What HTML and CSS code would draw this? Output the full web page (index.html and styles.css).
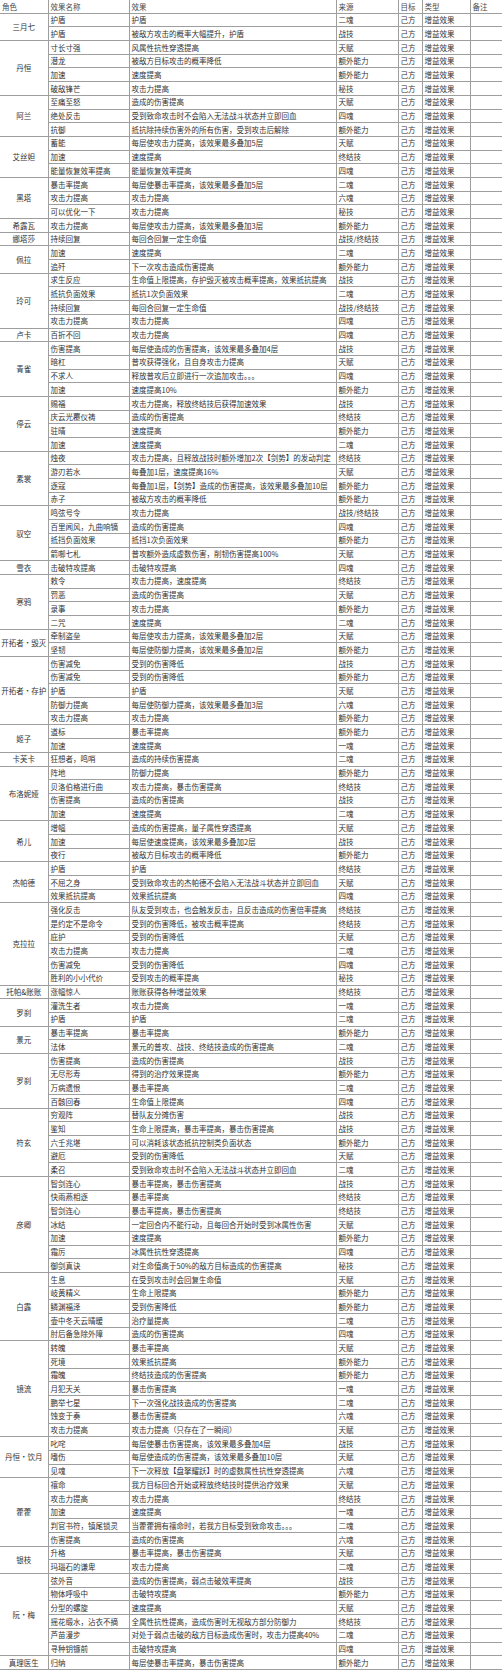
FILE: index.html
```html
<!DOCTYPE html>
<html lang="zh-CN">
<head>
<meta charset="utf-8">
<title>增益效果</title>
<link rel="stylesheet" href="styles.css">
</head>
<body>
<table class="t">
<colgroup><col class="c1"><col class="c2"><col class="c3"><col class="c4"><col class="c5"><col class="c6"><col class="c7"></colgroup>
<tr class="hd"><td class="f">角色</td><td>效果名称</td><td>效果</td><td>来源</td><td>目标</td><td>类型</td><td class="l">备注</td></tr>

<tr class="g"><td class="n" rowspan="2">三月七</td><td>护盾</td><td>护盾</td><td>二魂</td><td>己方</td><td>增益效果</td><td class="l"></td></tr>
<tr><td>护盾</td><td>被敌方攻击的概率大幅提升，护盾</td><td>战技</td><td>己方</td><td>增益效果</td><td class="l"></td></tr>

<tr class="g"><td class="n" rowspan="4">丹恒</td><td>寸长寸强</td><td>风属性抗性穿透提高</td><td>天赋</td><td>己方</td><td>增益效果</td><td class="l"></td></tr>
<tr><td>潜龙</td><td>被敌方目标攻击的概率降低</td><td>额外能力</td><td>己方</td><td>增益效果</td><td class="l"></td></tr>
<tr><td>加速</td><td>速度提高</td><td>额外能力</td><td>己方</td><td>增益效果</td><td class="l"></td></tr>
<tr><td>破敌锋芒</td><td>攻击力提高</td><td>秘技</td><td>己方</td><td>增益效果</td><td class="l"></td></tr>

<tr class="g"><td class="n" rowspan="3">阿兰</td><td>至痛至怒</td><td>造成的伤害提高</td><td>天赋</td><td>己方</td><td>增益效果</td><td class="l"></td></tr>
<tr><td>绝处反击</td><td>受到致命攻击时不会陷入无法战斗状态并立即回血</td><td>四魂</td><td>己方</td><td>增益效果</td><td class="l"></td></tr>
<tr><td>抗御</td><td>抵抗除持续伤害外的所有伤害，受到攻击后解除</td><td>额外能力</td><td>己方</td><td>增益效果</td><td class="l"></td></tr>

<tr class="g"><td class="n" rowspan="3">艾丝妲</td><td>蓄能</td><td>每层使攻击力提高，该效果最多叠加5层</td><td>天赋</td><td>己方</td><td>增益效果</td><td class="l"></td></tr>
<tr><td>加速</td><td>速度提高</td><td>终结技</td><td>己方</td><td>增益效果</td><td class="l"></td></tr>
<tr><td>能量恢复效率提高</td><td>能量恢复效率提高</td><td>四魂</td><td>己方</td><td>增益效果</td><td class="l"></td></tr>

<tr class="g"><td class="n" rowspan="3">黑塔</td><td>暴击率提高</td><td>每层使暴击率提高，该效果最多叠加5层</td><td>二魂</td><td>己方</td><td>增益效果</td><td class="l"></td></tr>
<tr><td>攻击力提高</td><td>攻击力提高</td><td>六魂</td><td>己方</td><td>增益效果</td><td class="l"></td></tr>
<tr><td>可以优化一下</td><td>攻击力提高</td><td>秘技</td><td>己方</td><td>增益效果</td><td class="l"></td></tr>

<tr class="g"><td class="n">希露瓦</td><td>攻击力提高</td><td>每层使攻击力提高，该效果最多叠加3层</td><td>额外能力</td><td>己方</td><td>增益效果</td><td class="l"></td></tr>

<tr class="g"><td class="n">娜塔莎</td><td>持续回复</td><td>每回合回复一定生命值</td><td>战技/终结技</td><td>己方</td><td>增益效果</td><td class="l"></td></tr>

<tr class="g"><td class="n" rowspan="2">佩拉</td><td>加速</td><td>速度提高</td><td>二魂</td><td>己方</td><td>增益效果</td><td class="l"></td></tr>
<tr><td>追歼</td><td>下一次攻击造成伤害提高</td><td>额外能力</td><td>己方</td><td>增益效果</td><td class="l"></td></tr>

<tr class="g"><td class="n" rowspan="4">玲可</td><td>求生反应</td><td>生命值上限提高，存护毁灭被攻击概率提高，效果抵抗提高</td><td>战技</td><td>己方</td><td>增益效果</td><td class="l"></td></tr>
<tr><td>抵抗负面效果</td><td>抵抗1次负面效果</td><td>二魂</td><td>己方</td><td>增益效果</td><td class="l"></td></tr>
<tr><td>持续回复</td><td>每回合回复一定生命值</td><td>战技/终结技</td><td>己方</td><td>增益效果</td><td class="l"></td></tr>
<tr><td>攻击力提高</td><td>攻击力提高</td><td>四魂</td><td>己方</td><td>增益效果</td><td class="l"></td></tr>

<tr class="g"><td class="n">卢卡</td><td>百折不回</td><td>攻击力提高</td><td>四魂</td><td>己方</td><td>增益效果</td><td class="l"></td></tr>

<tr class="g"><td class="n" rowspan="4">青雀</td><td>伤害提高</td><td>每层使造成的伤害提高，该效果最多叠加4层</td><td>战技</td><td>己方</td><td>增益效果</td><td class="l"></td></tr>
<tr><td>暗杠</td><td>普攻获得强化，且自身攻击力提高</td><td>天赋</td><td>己方</td><td>增益效果</td><td class="l"></td></tr>
<tr><td>不求人</td><td>释放普攻后立即进行一次追加攻击。。。</td><td>四魂</td><td>己方</td><td>增益效果</td><td class="l"></td></tr>
<tr><td>加速</td><td>速度提高10%</td><td>额外能力</td><td>己方</td><td>增益效果</td><td class="l"></td></tr>

<tr class="g"><td class="n" rowspan="4">停云</td><td>赐福</td><td>攻击力提高，释放终结技后获得加速效果</td><td>战技</td><td>己方</td><td>增益效果</td><td class="l"></td></tr>
<tr><td>庆云光覆仪祷</td><td>造成的伤害提高</td><td>终结技</td><td>己方</td><td>增益效果</td><td class="l"></td></tr>
<tr><td>驻晴</td><td>速度提高</td><td>额外能力</td><td>己方</td><td>增益效果</td><td class="l"></td></tr>
<tr><td>加速</td><td>速度提高</td><td>二魂</td><td>己方</td><td>增益效果</td><td class="l"></td></tr>

<tr class="g"><td class="n" rowspan="4">素裳</td><td>烛夜</td><td>攻击力提高，且释放战技时额外增加2次【剑势】的发动判定</td><td>终结技</td><td>己方</td><td>增益效果</td><td class="l"></td></tr>
<tr><td>游刃若水</td><td>每叠加1层，速度提高16%</td><td>天赋</td><td>己方</td><td>增益效果</td><td class="l"></td></tr>
<tr><td>逐寇</td><td>每叠加1层，【剑势】造成的伤害提高，该效果最多叠加10层</td><td>额外能力</td><td>己方</td><td>增益效果</td><td class="l"></td></tr>
<tr><td>赤子</td><td>被敌方攻击的概率降低</td><td>额外能力</td><td>己方</td><td>增益效果</td><td class="l"></td></tr>

<tr class="g"><td class="n" rowspan="4">驭空</td><td>鸣弦号令</td><td>攻击力提高</td><td>战技/终结技</td><td>己方</td><td>增益效果</td><td class="l"></td></tr>
<tr><td>百里闻风，九曲响镝</td><td>造成的伤害提高</td><td>四魂</td><td>己方</td><td>增益效果</td><td class="l"></td></tr>
<tr><td>抵挡负面效果</td><td>抵挡1次负面效果</td><td>额外能力</td><td>己方</td><td>增益效果</td><td class="l"></td></tr>
<tr><td>箭啣七札</td><td>普攻额外造成虚数伤害，削韧伤害提高100%</td><td>天赋</td><td>己方</td><td>增益效果</td><td class="l"></td></tr>

<tr class="g"><td class="n">雪衣</td><td>击破特攻提高</td><td>击破特攻提高</td><td>四魂</td><td>己方</td><td>增益效果</td><td class="l"></td></tr>

<tr class="g"><td class="n" rowspan="4">寒鸦</td><td>敕令</td><td>攻击力提高，速度提高</td><td>终结技</td><td>己方</td><td>增益效果</td><td class="l"></td></tr>
<tr><td>罚恶</td><td>造成的伤害提高</td><td>天赋</td><td>己方</td><td>增益效果</td><td class="l"></td></tr>
<tr><td>录事</td><td>攻击力提高</td><td>额外能力</td><td>己方</td><td>增益效果</td><td class="l"></td></tr>
<tr><td>二咒</td><td>速度提高</td><td>二魂</td><td>己方</td><td>增益效果</td><td class="l"></td></tr>

<tr class="g"><td class="n" rowspan="2">开拓者·毁灭</td><td>牵制盗垒</td><td>每层使攻击力提高，该效果最多叠加2层</td><td>天赋</td><td>己方</td><td>增益效果</td><td class="l"></td></tr>
<tr><td>坚韧</td><td>每层使防御力提高，该效果最多叠加2层</td><td>额外能力</td><td>己方</td><td>增益效果</td><td class="l"></td></tr>

<tr class="g"><td class="n" rowspan="5">开拓者·存护</td><td>伤害减免</td><td>受到的伤害降低</td><td>战技</td><td>己方</td><td>增益效果</td><td class="l"></td></tr>
<tr><td>伤害减免</td><td>受到的伤害降低</td><td>额外能力</td><td>己方</td><td>增益效果</td><td class="l"></td></tr>
<tr><td>护盾</td><td>护盾</td><td>天赋</td><td>己方</td><td>增益效果</td><td class="l"></td></tr>
<tr><td>防御力提高</td><td>每层使防御力提高，该效果最多叠加3层</td><td>六魂</td><td>己方</td><td>增益效果</td><td class="l"></td></tr>
<tr><td>攻击力提高</td><td>攻击力提高</td><td>额外能力</td><td>己方</td><td>增益效果</td><td class="l"></td></tr>

<tr class="g"><td class="n" rowspan="2">姬子</td><td>道标</td><td>暴击率提高</td><td>额外能力</td><td>己方</td><td>增益效果</td><td class="l"></td></tr>
<tr><td>加速</td><td>速度提高</td><td>一魂</td><td>己方</td><td>增益效果</td><td class="l"></td></tr>

<tr class="g"><td class="n">卡芙卡</td><td>狂想者，鸣哨</td><td>造成的持续伤害提高</td><td>二魂</td><td>己方</td><td>增益效果</td><td class="l"></td></tr>

<tr class="g"><td class="n" rowspan="4">布洛妮娅</td><td>阵地</td><td>防御力提高</td><td>额外能力</td><td>己方</td><td>增益效果</td><td class="l"></td></tr>
<tr><td>贝洛伯格进行曲</td><td>攻击力提高，暴击伤害提高</td><td>终结技</td><td>己方</td><td>增益效果</td><td class="l"></td></tr>
<tr><td>伤害提高</td><td>造成的伤害提高</td><td>战技</td><td>己方</td><td>增益效果</td><td class="l"></td></tr>
<tr><td>加速</td><td>速度提高</td><td>二魂</td><td>己方</td><td>增益效果</td><td class="l"></td></tr>

<tr class="g"><td class="n" rowspan="3">希儿</td><td>增幅</td><td>造成的伤害提高，量子属性穿透提高</td><td>天赋</td><td>己方</td><td>增益效果</td><td class="l"></td></tr>
<tr><td>加速</td><td>每层使速度提高，该效果最多叠加2层</td><td>战技</td><td>己方</td><td>增益效果</td><td class="l"></td></tr>
<tr><td>夜行</td><td>被敌方目标攻击的概率降低</td><td>额外能力</td><td>己方</td><td>增益效果</td><td class="l"></td></tr>

<tr class="g"><td class="n" rowspan="3">杰帕德</td><td>护盾</td><td>护盾</td><td>终结技</td><td>己方</td><td>增益效果</td><td class="l"></td></tr>
<tr><td>不屈之身</td><td>受到致命攻击的杰帕德不会陷入无法战斗状态并立即回血</td><td>天赋</td><td>己方</td><td>增益效果</td><td class="l"></td></tr>
<tr><td>效果抵抗提高</td><td>效果抵抗提高</td><td>四魂</td><td>己方</td><td>增益效果</td><td class="l"></td></tr>

<tr class="g"><td class="n" rowspan="6">克拉拉</td><td>强化反击</td><td>队友受到攻击，也会触发反击，且反击造成的伤害倍率提高</td><td>终结技</td><td>己方</td><td>增益效果</td><td class="l"></td></tr>
<tr><td>是约定不是命令</td><td>受到的伤害降低，被攻击概率提高</td><td>终结技</td><td>己方</td><td>增益效果</td><td class="l"></td></tr>
<tr><td>庇护</td><td>受到的伤害降低</td><td>天赋</td><td>己方</td><td>增益效果</td><td class="l"></td></tr>
<tr><td>攻击力提高</td><td>攻击力提高</td><td>二魂</td><td>己方</td><td>增益效果</td><td class="l"></td></tr>
<tr><td>伤害减免</td><td>受到的伤害降低</td><td>四魂</td><td>己方</td><td>增益效果</td><td class="l"></td></tr>
<tr><td>胜利的小小代价</td><td>受到攻击的概率提高</td><td>秘技</td><td>己方</td><td>增益效果</td><td class="l"></td></tr>

<tr class="g"><td class="n">托帕&amp;账账</td><td>涨幅惊人</td><td>账账获得各种增益效果</td><td>终结技</td><td>己方</td><td>增益效果</td><td class="l"></td></tr>

<tr class="g"><td class="n" rowspan="2">罗刹</td><td>灌洗生者</td><td>攻击力提高</td><td>一魂</td><td>己方</td><td>增益效果</td><td class="l"></td></tr>
<tr><td>护盾</td><td>护盾</td><td>二魂</td><td>己方</td><td>增益效果</td><td class="l"></td></tr>

<tr class="g"><td class="n" rowspan="2">景元</td><td>暴击率提高</td><td>暴击率提高</td><td>额外能力</td><td>己方</td><td>增益效果</td><td class="l"></td></tr>
<tr><td>法体</td><td>景元的普攻、战技、终结技造成的伤害提高</td><td>二魂</td><td>己方</td><td>增益效果</td><td class="l"></td></tr>

<tr class="g"><td class="n" rowspan="4">罗刹</td><td>伤害提高</td><td>造成的伤害提高</td><td>战技</td><td>己方</td><td>增益效果</td><td class="l"></td></tr>
<tr><td>无尽形寿</td><td>得到的治疗效果提高</td><td>额外能力</td><td>己方</td><td>增益效果</td><td class="l"></td></tr>
<tr><td>万病遗恨</td><td>暴击率提高</td><td>二魂</td><td>己方</td><td>增益效果</td><td class="l"></td></tr>
<tr><td>百骸回春</td><td>生命值上限提高</td><td>四魂</td><td>己方</td><td>增益效果</td><td class="l"></td></tr>

<tr class="g"><td class="n" rowspan="5">符玄</td><td>穷观阵</td><td>替队友分摊伤害</td><td>战技</td><td>己方</td><td>增益效果</td><td class="l"></td></tr>
<tr><td>鉴知</td><td>生命上限提高，暴击率提高，暴击伤害提高</td><td>战技</td><td>己方</td><td>增益效果</td><td class="l"></td></tr>
<tr><td>六壬兆堪</td><td>可以消耗该状态抵抗控制类负面状态</td><td>额外能力</td><td>己方</td><td>增益效果</td><td class="l"></td></tr>
<tr><td>避厄</td><td>受到的伤害降低</td><td>天赋</td><td>己方</td><td>增益效果</td><td class="l"></td></tr>
<tr><td>柔召</td><td>受到致命攻击时不会陷入无法战斗状态并立即回血</td><td>二魂</td><td>己方</td><td>增益效果</td><td class="l"></td></tr>

<tr class="g"><td class="n" rowspan="7">彦卿</td><td>智剑连心</td><td>暴击率提高，暴击伤害提高</td><td>战技</td><td>己方</td><td>增益效果</td><td class="l"></td></tr>
<tr><td>快雨燕相逐</td><td>暴击率提高</td><td>终结技</td><td>己方</td><td>增益效果</td><td class="l"></td></tr>
<tr><td>智剑连心</td><td>暴击率提高，暴击伤害提高</td><td>终结技</td><td>己方</td><td>增益效果</td><td class="l"></td></tr>
<tr><td>冰结</td><td>一定回合内不能行动，且每回合开始时受到冰属性伤害</td><td>天赋</td><td>己方</td><td>增益效果</td><td class="l"></td></tr>
<tr><td>加速</td><td>速度提高</td><td>额外能力</td><td>己方</td><td>增益效果</td><td class="l"></td></tr>
<tr><td>霜厉</td><td>冰属性抗性穿透提高</td><td>四魂</td><td>己方</td><td>增益效果</td><td class="l"></td></tr>
<tr><td>御剑真诀</td><td>对生命值高于50%的敌方目标造成的伤害提高</td><td>秘技</td><td>己方</td><td>增益效果</td><td class="l"></td></tr>

<tr class="g"><td class="n" rowspan="5">白露</td><td>生息</td><td>在受到攻击时会回复生命值</td><td>天赋</td><td>己方</td><td>增益效果</td><td class="l"></td></tr>
<tr><td>岐黄精义</td><td>生命上限提高</td><td>额外能力</td><td>己方</td><td>增益效果</td><td class="l"></td></tr>
<tr><td>鳞渊福泽</td><td>受到伤害降低</td><td>额外能力</td><td>己方</td><td>增益效果</td><td class="l"></td></tr>
<tr><td>壶中冬天云晴暖</td><td>治疗量提高</td><td>二魂</td><td>己方</td><td>增益效果</td><td class="l"></td></tr>
<tr><td>肘后备急除外障</td><td>造成的伤害提高</td><td>四魂</td><td>己方</td><td>增益效果</td><td class="l"></td></tr>

<tr class="g"><td class="n" rowspan="7">镜流</td><td>转魄</td><td>暴击率提高</td><td>天赋</td><td>己方</td><td>增益效果</td><td class="l"></td></tr>
<tr><td>死境</td><td>效果抵抗提高</td><td>额外能力</td><td>己方</td><td>增益效果</td><td class="l"></td></tr>
<tr><td>霜魄</td><td>终结技造成的伤害提高</td><td>额外能力</td><td>己方</td><td>增益效果</td><td class="l"></td></tr>
<tr><td>月犯天关</td><td>暴击伤害提高</td><td>一魂</td><td>己方</td><td>增益效果</td><td class="l"></td></tr>
<tr><td>鹏举七星</td><td>下一次强化战技造成的伤害提高</td><td>二魂</td><td>己方</td><td>增益效果</td><td class="l"></td></tr>
<tr><td>蚀变于奏</td><td>暴击伤害提高</td><td>六魂</td><td>己方</td><td>增益效果</td><td class="l"></td></tr>
<tr><td>攻击力提高</td><td>攻击力提高（只存在了一瞬间）</td><td>天赋</td><td>己方</td><td>增益效果</td><td class="l"></td></tr>

<tr class="g"><td class="n" rowspan="3">丹恒·饮月</td><td>叱咤</td><td>每层使暴击伤害提高，该效果最多叠加4层</td><td>战技</td><td>己方</td><td>增益效果</td><td class="l"></td></tr>
<tr><td>嗜伤</td><td>每层使造成的伤害提高，该效果最多叠加10层</td><td>天赋</td><td>己方</td><td>增益效果</td><td class="l"></td></tr>
<tr><td>见魂</td><td>下一次释放【盘拏耀跃】时的虚数属性抗性穿透提高</td><td>六魂</td><td>己方</td><td>增益效果</td><td class="l"></td></tr>

<tr class="g"><td class="n" rowspan="5">藿藿</td><td>禳命</td><td>我方目标回合开始或释放终结技时提供治疗效果</td><td>天赋</td><td>己方</td><td>增益效果</td><td class="l"></td></tr>
<tr><td>攻击力提高</td><td>攻击力提高</td><td>终结技</td><td>己方</td><td>增益效果</td><td class="l"></td></tr>
<tr><td>加速</td><td>速度提高</td><td>一魂</td><td>己方</td><td>增益效果</td><td class="l"></td></tr>
<tr><td>判官书符，镇尾锁灵</td><td>当藿藿拥有禳命时，若我方目标受到致命攻击。。。</td><td>二魂</td><td>己方</td><td>增益效果</td><td class="l"></td></tr>
<tr><td>伤害提高</td><td>造成的伤害提高</td><td>六魂</td><td>己方</td><td>增益效果</td><td class="l"></td></tr>

<tr class="g"><td class="n" rowspan="2">银枝</td><td>升格</td><td>暴击率提高，暴击伤害提高</td><td>天赋</td><td>己方</td><td>增益效果</td><td class="l"></td></tr>
<tr><td>玛瑙石的谦卑</td><td>攻击力提高</td><td>二魂</td><td>己方</td><td>增益效果</td><td class="l"></td></tr>

<tr class="g"><td class="n" rowspan="6">阮·梅</td><td>弦外音</td><td>造成的伤害提高，弱点击破效率提高</td><td>战技</td><td>己方</td><td>增益效果</td><td class="l"></td></tr>
<tr><td>物体呼吸中</td><td>击破特攻提高</td><td>额外能力</td><td>己方</td><td>增益效果</td><td class="l"></td></tr>
<tr><td>分型的螺旋</td><td>速度提高</td><td>天赋</td><td>己方</td><td>增益效果</td><td class="l"></td></tr>
<tr><td>摇花缎水，沾衣不摘</td><td>全属性抗性提高，造成伤害时无视敌方部分防御力</td><td>终结技</td><td>己方</td><td>增益效果</td><td class="l"></td></tr>
<tr><td>芦苗漫步</td><td>对处于弱点击破的敌方目标造成伤害时，攻击力提高40%</td><td>二魂</td><td>己方</td><td>增益效果</td><td class="l"></td></tr>
<tr><td>寻种钥镰前</td><td>击破特攻提高</td><td>四魂</td><td>己方</td><td>增益效果</td><td class="l"></td></tr>

<tr class="g"><td class="n">真理医生</td><td>归纳</td><td>每层使暴击率提高，暴击伤害提高</td><td>额外能力</td><td>己方</td><td>增益效果</td><td class="l"></td></tr>
</table>
</body>
</html>
```
FILE: styles.css
```css
html, body {
  margin: 0;
  padding: 0;
  background: #ffffff;
}

.t {
  border-collapse: collapse;
  table-layout: fixed;
  width: 502px;
  font-family: "Noto Sans CJK SC", "Noto Sans", sans-serif;
  font-size: 7.5px;
  color: #333333;
}

.c1 { width: 48px; }
.c2 { width: 81px; }
.c3 { width: 207px; }
.c4 { width: 62px; }
.c5 { width: 24px; }
.c6 { width: 48px; }
.c7 { width: 32px; }

.t td {
  height: 12.7px;
  padding: 0 0 0 2px;
  border: 1px solid #9e9e9e;
  white-space: nowrap;
  overflow: hidden;
  vertical-align: middle;
  line-height: 1;
}

.t tr.hd td {
  border-top: 0;
  color: #4a4a4a;
}

.t td.f {
  border-left: 0;
}

.t td.n {
  text-align: center;
  padding: 0;
  border-left: 0;
}

.t td.l {
  border-right: 0;
}

.t tr.g td {
  border-top: 1px solid #737373;
}
```
